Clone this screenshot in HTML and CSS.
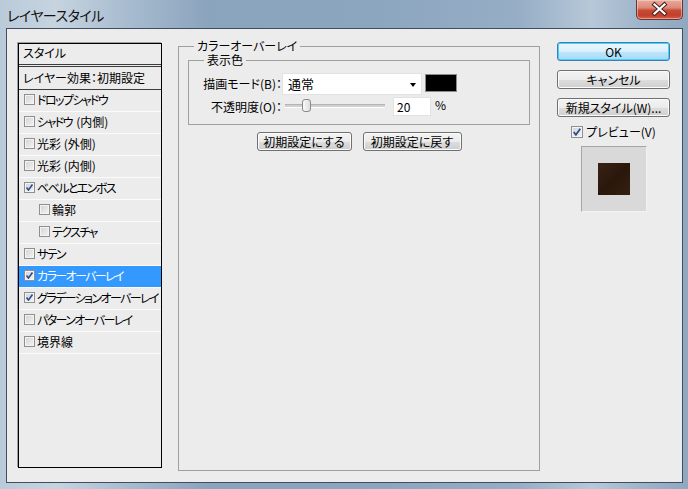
FILE: index.html
```html
<!DOCTYPE html>
<html lang="ja">
<head>
<meta charset="utf-8">
<title>レイヤースタイル</title>
<link rel="stylesheet" href="styles.css">
</head>
<body>
<div class="window">
  <div class="titlebar">
    <span class="title">レイヤースタイル</span>
    <div class="close">
      <svg width="47" height="20" viewBox="0 0 47 20">
        <path d="M18.5 5.5 L28.5 14.5 M28.5 5.5 L18.5 14.5" stroke="#4a2320" stroke-width="4.2" stroke-linecap="square" fill="none"/>
        <path d="M18.5 5.5 L28.5 14.5 M28.5 5.5 L18.5 14.5" stroke="#ffffff" stroke-width="2.2" stroke-linecap="square" fill="none"/>
      </svg>
    </div>
  </div>
  <div class="client">
    <div class="styles-panel">
      <div class="panel-head">スタイル</div>
      <div class="panel-preset">レイヤー効果：初期設定</div>
      <ul class="fx-list">
        <li class="fx"><span class="cb"></span><span class="kn">ドロップシャドウ</span></li>
        <li class="fx"><span class="cb"></span><span class="kn">シャドウ</span> (内側)</li>
        <li class="fx"><span class="cb"></span>光彩 (外側)</li>
        <li class="fx"><span class="cb"></span>光彩 (内側)</li>
        <li class="fx"><span class="cb"><svg class="check" viewBox="0 0 11 11"><path d="M2.5 5.5 L4.5 8 L8.5 2.5" stroke="#2d4a8f" stroke-width="1.6" fill="none"/></svg></span><span class="kn">ベベルとエンボス</span></li>
        <li class="fx sub"><span class="cb"></span>輪郭</li>
        <li class="fx sub"><span class="cb"></span><span class="kn">テクスチャ</span></li>
        <li class="fx"><span class="cb"></span><span class="kn">サテン</span></li>
        <li class="fx selected"><span class="cb"><svg class="check" viewBox="0 0 11 11"><path d="M2.5 5.5 L4.5 8 L8.5 2.5" stroke="#2d4a8f" stroke-width="1.6" fill="none"/></svg></span><span class="kn">カラーオーバーレイ</span></li>
        <li class="fx"><span class="cb"><svg class="check" viewBox="0 0 11 11"><path d="M2.5 5.5 L4.5 8 L8.5 2.5" stroke="#2d4a8f" stroke-width="1.6" fill="none"/></svg></span><span class="kn">グラデーションオーバーレイ</span></li>
        <li class="fx"><span class="cb"></span><span class="kn">パターンオーバーレイ</span></li>
        <li class="fx"><span class="cb"></span>境界線</li>
      </ul>
    </div>

    <fieldset class="group outer">
      <legend class="legend-outer">カラーオーバーレイ</legend>
      <fieldset class="group inner">
        <legend class="legend-inner">表示色</legend>
        <div class="row row-mode">
          <label class="lbl">描画モード(B)：</label>
          <div class="combo">通常<span class="arrow"></span></div>
          <div class="swatch"></div>
        </div>
        <div class="row row-opacity">
          <label class="lbl">不透明度(O)：</label>
          <div class="slider"><div class="track"></div><div class="thumb"></div></div>
          <div class="num">20</div>
          <span class="pct">%</span>
        </div>
      </fieldset>
      <div class="btn-row">
        <button class="btn btn-set">初期設定にする</button>
        <button class="btn btn-reset">初期設定に戻す</button>
      </div>
    </fieldset>

    <div class="side">
      <button class="btn btn-side btn-default">OK</button>
      <button class="btn btn-side">キャンセル</button>
      <button class="btn btn-side">新規スタイル(W)...</button>
      <label class="preview-cb"><span class="cb cb-lg"><svg class="check" viewBox="0 0 11 11"><path d="M2.5 5.5 L4.5 8 L8.5 2.5" stroke="#2d4a8f" stroke-width="1.6" fill="none"/></svg></span>プレビュー(V)</label>
      <div class="preview"><div class="chip"></div></div>
    </div>
  </div>
</div>
</body>
</html>
```
FILE: styles.css
```css
html, body {
  margin: 0;
  padding: 0;
  background: #8fa8c1;
}

.window {
  width: 688px;
  height: 489px;
  box-sizing: border-box;
  padding: 0 5px 6px 6px;
  display: flex;
  flex-direction: column;
  background: linear-gradient(90deg, #b9cad9 0%, #c6d4e0 8%, #a9bdd0 18%, #8ba4bd 30%, #8da6bf 55%, #95adc5 75%, #b7c8d8 86%, #9fb5ca 93%, #8fa8c0 100%);
  font-family: "Noto Sans CJK JP", "Noto Sans", sans-serif;
  font-feature-settings: "palt";
  font-size: 12px;
  color: #000;
}

.titlebar {
  height: 28px;
  flex: none;
  display: flex;
  justify-content: space-between;
  align-items: flex-start;
}

.title {
  margin: 6px 0 0 1px;
  font-size: 14px;
  letter-spacing: -0.5px;
  line-height: 18px;
  color: #111;
}

.close {
  width: 47px;
  height: 20px;
  box-sizing: border-box;
  border: 1px solid #6d3530;
  border-top: none;
  border-radius: 0 0 5px 5px;
  background: linear-gradient(#e9aa9c 0%, #dc8a78 40%, #c84a36 55%, #c23e2b 80%, #d4614c 100%);
  box-shadow: inset 0 0 0 1px rgba(255, 220, 210, 0.5);
}

.close svg {
  display: block;
  margin: -1px 0 0 -1px;
}

.client {
  flex: 1;
  border: 1px solid #3f4f60;
  background: #ececec;
  display: flex;
  align-items: flex-start;
  padding: 10px 0 0 11px;
}

/* left styles list */
.styles-panel {
  margin-top: 4px;
  width: 144px;
  height: 425px;
  box-sizing: border-box;
  border: 1px solid #000;
  box-shadow: -1px -1px 0 #a0a0a0;
  flex: none;
}

.panel-head {
  height: 20px;
  line-height: 18px;
  padding-left: 4px;
  border-bottom: 3px double #3c3c3c;
}

.panel-preset {
  height: 22px;
  line-height: 21px;
  padding-left: 4px;
  border-bottom: 1px solid #3c3c3c;
}

.fx-list {
  list-style: none;
  margin: 0;
  padding: 0;
}

.fx {
  height: 19px;
  padding-bottom: 2px;
  border-bottom: 1px solid #fbfbfb;
  display: flex;
  align-items: center;
  padding-left: 5px;
  white-space: pre;
}

.kn {
  letter-spacing: -1.6px;
  padding-right: 1.6px;
}

.fx.sub {
  padding-left: 20px;
}

.fx.selected {
  background: #3399ff;
  color: #fff;
}

.cb {
  width: 11px;
  height: 11px;
  box-sizing: border-box;
  border: 1px solid #8f8f8f;
  background: linear-gradient(135deg, #d2d2d2, #f4f4f4);
  box-shadow: inset 0 0 0 1px #f4f4f4;
  margin-right: 2px;
  flex: none;
  position: relative;
}

.check {
  position: absolute;
  left: -1px;
  top: -1px;
  width: 11px;
  height: 11px;
}

/* group boxes */
.group {
  margin: 0;
  box-sizing: border-box;
  border: 1px solid #a0a0a0;
  min-width: 0;
}

.outer {
  margin-left: 16px;
  width: 362px;
  height: 432px;
  padding: 0 9px;
  flex: none;
}

.inner {
  width: 342px;
  height: 72px;
  padding: 6px 0 0 0;
}

.group legend {
  line-height: 14px;
  padding: 0 3px;
}

.legend-outer {
  margin-left: 6px;
}

.legend-inner {
  margin-left: 15px;
}

.row {
  display: flex;
  align-items: flex-start;
}

.row-mode {
  height: 22px;
}

.row-opacity {
  height: 19px;
  margin-top: 2px;
}

.lbl {
  width: 93px;
  text-align: right;
  flex: none;
}

.row-mode .lbl {
  line-height: 22px;
}

.row-opacity .lbl {
  line-height: 19px;
}

.combo {
  width: 140px;
  height: 22px;
  box-sizing: border-box;
  border: 1px solid #e2e2e2;
  background: #fff;
  padding-left: 5px;
  line-height: 20px;
  display: flex;
  justify-content: space-between;
  align-items: center;
  font-size: 13px;
}

.arrow {
  width: 0;
  height: 0;
  border-left: 3.5px solid transparent;
  border-right: 3.5px solid transparent;
  border-top: 4px solid #000;
  margin-right: 5px;
  margin-top: 1px;
}

.swatch {
  margin: 1px 0 0 3px;
  width: 32px;
  height: 18px;
  box-sizing: border-box;
  background: #000;
  border: 1px solid #8a8a8a;
}

.slider {
  margin-left: 3px;
  width: 100px;
  height: 19px;
  position: relative;
}

.track {
  margin-top: 7px;
  height: 2px;
  background: #d0d0d0;
  border-top: 1px solid #b4b4b4;
  border-bottom: 1px solid #fff;
}

.thumb {
  position: absolute;
  left: 17px;
  top: 2px;
  width: 9px;
  height: 13px;
  box-sizing: border-box;
  border: 1px solid #8a8a8a;
  border-radius: 3px;
  background: linear-gradient(90deg, #fafafa, #dedede);
}

.num {
  margin-left: 8px;
  width: 38px;
  height: 19px;
  box-sizing: border-box;
  border: 1px solid #e2e2e2;
  background: #fff;
  padding-left: 3px;
  line-height: 17px;
}

.pct {
  margin-left: 4px;
  line-height: 16px;
}

/* buttons */
.btn {
  height: 19px;
  box-sizing: border-box;
  border: 1px solid #707070;
  border-radius: 3px;
  background: linear-gradient(#f3f3f3 0%, #ebebeb 50%, #dddddd 51%, #cfcfcf 100%);
  box-shadow: inset 0 0 0 1px #fbfbfb;
  font-family: inherit;
  font-feature-settings: "palt";
  font-size: 12px;
  line-height: 16px;
  color: #000;
  padding: 0;
}

.btn-row {
  display: flex;
  justify-content: center;
  gap: 11px;
  margin-top: 7px;
}

.btn-set {
  width: 95px;
}

.btn-reset {
  width: 99px;
}

.side {
  margin: 3px 0 0 17px;
  width: 113px;
  display: flex;
  flex-direction: column;
  align-items: center;
  flex: none;
}

.btn-side {
  width: 113px;
}

.btn-side + .btn-side {
  margin-top: 9px;
}

.btn-default {
  border-color: #3c7fb1;
  background: linear-gradient(#eaf6fd 0%, #d9f0fc 50%, #bee6fd 51%, #a7d9f5 100%);
  box-shadow: inset 0 0 0 1px #48d0f8;
}

.preview-cb {
  margin-top: 8px;
  height: 13px;
  display: flex;
  align-items: center;
  line-height: 13px;
}

.cb-lg {
  width: 12px;
  height: 12px;
  margin-right: 3px;
}

.cb-lg .check {
  width: 12px;
  height: 12px;
}

.preview {
  margin-top: 8px;
  width: 66px;
  height: 66px;
  box-sizing: border-box;
  background: #d9d9d9;
  border: 1px solid;
  border-color: #a6a6a6 #f2f2f2 #f2f2f2 #a6a6a6;
  display: flex;
  align-items: center;
  justify-content: center;
}

.chip {
  width: 32px;
  height: 32px;
  background: linear-gradient(135deg, #3a2212 0%, #2a170c 50%, #33200f 100%);
}
```
